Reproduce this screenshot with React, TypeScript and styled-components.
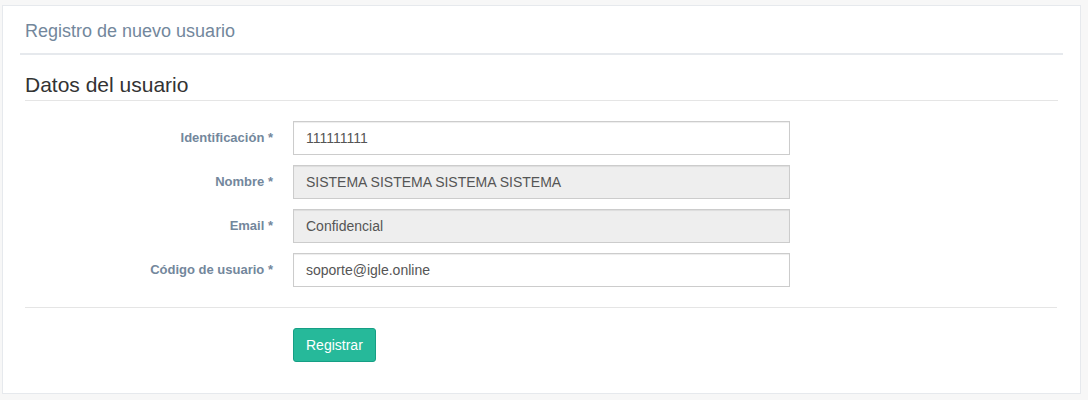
import React from 'react'
import styled, { createGlobalStyle } from 'styled-components'

const GlobalStyle = createGlobalStyle`
  html, body { margin: 0; padding: 0; background: #F7F7F7; }
  body {
    font-family: "Liberation Sans", Arial, sans-serif;
    color: #73879C; font-size: 13px; line-height: 1.471;
  }
  * { box-sizing: border-box; }
`

const Page = styled.div`padding: 5px 7px 6px 2px;`

const Panel = styled.div`
  background: #fff; border: 1px solid #E6E9ED;
  padding: 10px 17px 31px;
`

const TitleBar = styled.div`
  border-bottom: 2px solid #E6E9ED;
  padding: 1px 5px 6px;
`

const Title = styled.h2`
  margin: 5px 0 6px; font-size: 18px; font-weight: 400;
  line-height: 19px; color: #73879C;
`

const Content = styled.div`padding: 0 5px; margin-top: 15px;`

const Section = styled.div`
  font-size: 21px; line-height: 30px; color: #333;
  border-bottom: 1px solid #e5e5e5; margin-bottom: 20px;
`

const Form = styled.form`
  display: grid; grid-template-columns: 248px 497px;
  column-gap: 20px; row-gap: 10px; align-items: center;
`

const Label = styled.label`
  text-align: right; font-weight: 700; font-size: 13px; color: #73879C;
`

const Input = styled.input`
  height: 34px; width: 100%; padding: 6px 12px;
  font-family: inherit; font-size: 14px; color: #555;
  border: 1px solid #ccc; border-radius: 0;
  box-shadow: inset 0 1px 1px rgba(0,0,0,.075);
  background: ${p => (p.disabled ? '#eee' : '#fff')};
  outline: none;
`

const Divider = styled.hr`
  grid-column: 1 / -1; border: 0; border-top: 1px solid #e5e5e5;
  margin: 10px 0 10px; width: 1032px;
`

const Actions = styled.div`grid-column: 2;`

const Button = styled.button`
  height: 34px; padding: 6px 12px; font-family: inherit; font-size: 14px;
  color: #fff; background: #26B99A; border: 1px solid #169F85;
  border-radius: 3px; cursor: pointer; line-height: 20px;
`

const fields = [
  { label: 'Identificación *', value: '111111111', disabled: false },
  { label: 'Nombre *', value: 'SISTEMA SISTEMA SISTEMA SISTEMA', disabled: true },
  { label: 'Email *', value: 'Confidencial', disabled: true },
  { label: 'Código de usuario *', value: 'soporte@igle.online', disabled: false },
]

export default function App() {
  return (
    <Page>
      <GlobalStyle />
      <Panel>
        <TitleBar>
          <Title>Registro de nuevo usuario</Title>
        </TitleBar>
        <Content>
          <Section>Datos del usuario</Section>
          <Form onSubmit={e => e.preventDefault()}>
            {fields.map(f => (
              <React.Fragment key={f.label}>
                <Label>{f.label}</Label>
                <Input defaultValue={f.value} disabled={f.disabled} />
              </React.Fragment>
            ))}
            <Divider />
            <Actions>
              <Button type="submit">Registrar</Button>
            </Actions>
          </Form>
        </Content>
      </Panel>
    </Page>
  )
}
